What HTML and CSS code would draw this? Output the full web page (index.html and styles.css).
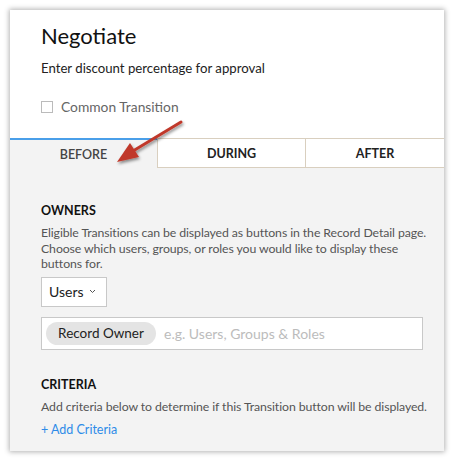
FILE: index.html
```html
<!DOCTYPE html>
<html>
<head>
<meta charset="utf-8">
<link rel="stylesheet" href="styles.css">
</head>
<body>
<div class="card">
  <div class="head">
    <h1 class="title">Negotiate</h1>
    <p class="sub">Enter discount percentage for approval</p>
    <label class="check"><span class="box"></span><span>Common Transition</span></label>
  </div>
  <div class="tabs">
    <div class="tab active">BEFORE</div>
    <div class="tab">DURING</div>
    <div class="tab">AFTER</div>
  </div>
  <div class="content">
    <h2 class="sec">OWNERS</h2>
    <p class="desc">Eligible Transitions can be displayed as buttons in the Record Detail page.<br>Choose which users, groups, or roles you would like to display these<br>buttons for.</p>
    <div class="select"><span>Users</span><svg class="chev" width="7" height="5" viewBox="0 0 7 5"><path d="M1 1l2.5 2.5L6 1" fill="none" stroke="#555" stroke-width="1"/></svg></div>
    <div class="input"><span class="chip">Record Owner</span><span class="ph">e.g. Users, Groups &amp; Roles</span></div>
    <h2 class="sec sec2">CRITERIA</h2>
    <p class="desc">Add criteria below to determine if this Transition button will be displayed.</p>
    <a class="add">+ Add Criteria</a>
  </div>
  <svg class="arrow" width="80" height="60" viewBox="0 0 80 60">
    <defs>
      <filter id="sh" x="-30%" y="-30%" width="160%" height="160%">
        <feDropShadow dx="1" dy="2" stdDeviation="1.5" flood-color="#000" flood-opacity="0.45"/>
      </filter>
    </defs>
    <g filter="url(#sh)">
      <line x1="70" y1="4" x2="22" y2="33" stroke="#c0392b" stroke-width="3" stroke-linecap="round"/>
      <polygon points="6,44 19,25 28,39" fill="#c0392b"/>
    </g>
  </svg>
</div>
</body>
</html>
```
FILE: styles.css
```css
* { box-sizing: border-box; }
body {
  margin: 0;
  background: #fff;
  font-family: Lato, "Open Sans", sans-serif;
}
.card {
  position: relative;
  margin: 10px;
  width: 434px;
  height: 441px;
  background: #fff;
  box-shadow: 0 0 5px 1px rgba(0,0,0,0.3);
  display: flex;
  flex-direction: column;
  overflow: hidden;
}
.head {
  flex: 0 0 128px;
  padding: 11px 31px 0;
}
.title {
  margin: 0;
  font-size: 22px;
  font-weight: 400;
  color: #111;
  line-height: 30px;
}
.sub {
  margin: 8px 0 0;
  font-size: 13.2px;
  color: #222;
  line-height: 18px;
}
.check {
  display: flex;
  align-items: center;
  gap: 8px;
  margin-top: 21px;
  font-size: 13.8px;
  color: #666;
}
.box {
  width: 12px;
  height: 12px;
  border: 1px solid #bbb;
  background: #fff;
}
.tabs {
  display: flex;
  flex: 0 0 30px;
}
.tab {
  flex: 0 0 148px;
  display: flex;
  align-items: center;
  justify-content: center;
  font-size: 12.5px;
  font-weight: 700;
  color: #222;
  border-top: 1px solid #d9cfbf;
  border-bottom: 1px solid #d9cfbf;
  border-left: 1px solid #d9cfbf;
  background: #fff;
}
.tab:last-child { flex: 1; }
.tab.active {
  flex: 0 0 147px;
  background: #f3f3f3;
  border: none;
  border-top: 2px solid #4a9fe9;
  color: #444;
  font-weight: 600;
}
.content {
  flex: 1 1 auto;
  background: #f3f3f3;
  padding: 35px 10px 0 31px;
}
.sec {
  margin: 0;
  font-size: 12.5px;
  font-weight: 700;
  color: #111;
  line-height: 16px;
}
.sec2 { margin-top: 27px; }
.desc {
  margin: 6px 0 0;
  font-size: 12.3px;
  letter-spacing: -0.1px;
  line-height: 15.5px;
  color: #555;
  white-space: nowrap;
}
.select {
  margin-top: 5px;
  width: 66px;
  height: 30px;
  border: 1px solid #c8c8c8;
  background: #fff;
  display: flex;
  align-items: center;
  justify-content: space-between;
  padding: 0 10px 0 7px;
  font-size: 14px;
  color: #222;
}
.input {
  margin-top: 10px;
  width: 382px;
  height: 33px;
  border: 1px solid #c8c8c8;
  background: #fff;
  display: flex;
  align-items: center;
  padding-left: 4px;
  gap: 8px;
  font-size: 14px;
}
.chip {
  height: 23px;
  width: 110px;
  border-radius: 12px;
  background: #e4e4e4;
  color: #222;
  display: flex;
  align-items: center;
  justify-content: center;
  white-space: nowrap;
  font-size: 13.5px;
}
.ph { color: #bcbcbc; }
.add {
  display: block;
  margin-top: 8px;
  font-size: 12.5px;
  color: #2d8be8;
}
.arrow {
  position: absolute;
  left: 101px;
  top: 108px;
}
```
